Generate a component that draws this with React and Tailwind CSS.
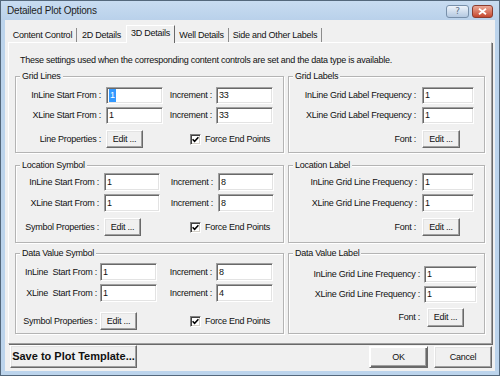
import React from 'react'

const Input = ({ className, children }) => (
  <div className={`bg-white border border-t-[#a0a0a0] border-l-[#a0a0a0] border-b-white border-r-white shadow-[inset_1px_1px_0_#696969,inset_-1px_-1px_0_#e3e3e3] pl-[2px] flex items-center ${className}`}>
    {children}
  </div>
)

const Btn = ({ className, children }) => (
  <div className={`flex items-center justify-center whitespace-nowrap bg-[#f0f0f0] border border-t-white border-l-white border-b-[#696969] border-r-[#696969] shadow-[inset_-1px_-1px_0_#a0a0a0,inset_1px_1px_0_#e3e3e3] ${className}`}>
    {children}
  </div>
)

const Check = () => (
  <div className="w-[11px] h-[11px] bg-white border border-t-[#808080] border-l-[#808080] border-b-white border-r-white shadow-[inset_1px_1px_0_#404040,inset_-1px_-1px_0_#d4d0c8] flex items-center justify-center">
    <svg width="7" height="7" viewBox="0 0 7 7">
      <path d="M0.6 3.2 L2.6 5.3 L6.4 1.2" stroke="#000" strokeWidth="1.5" fill="none" />
    </svg>
  </div>
)

const Group = ({ title, className, children }) => (
  <div className={`border border-[#b4b4b4] shadow-[inset_1px_1px_0_#fff,1px_1px_0_#fff] ${className}`}>
    <div className="-mt-[7px] ml-[4px] px-[2px] w-fit bg-[#f0f0f0] leading-[13px]">{title}</div>
    {children}
  </div>
)

const Force = ({ className }) => (
  <div className={`flex items-center ${className}`}>
    <Check />
    <span className="ml-[4px]">Force End Points</span>
  </div>
)

export default function App() {
  return (
    <div className="w-[500px] h-[376px] flex flex-col border border-[#54687c] bg-[#bcd4ec] font-['Liberation_Sans',sans-serif] text-[9px] tracking-[-0.25px] leading-[13px] text-[#111] whitespace-nowrap overflow-hidden">
      {/* title bar */}
      <div className="h-[19px] flex items-start bg-linear-to-b from-[#c8dcf1] to-[#b9d1ea]">
        <span className="ml-[6px] mt-[3px] text-[10px] tracking-[-0.2px] text-[#1e1e1e]">Detailed Plot Options</span>
        <div className="ml-auto mt-[4px] mr-[6px] flex gap-[3px]">
          <div className="w-[23px] h-[13px] rounded-[3px] border border-[#7890aa] bg-linear-to-b from-[#eef4fb] to-[#b4c9e1] flex items-center justify-center font-['DejaVu_Sans',sans-serif] text-[9px] leading-[9px] text-[#5c6f84]">?</div>
          <div className="w-[21px] h-[13px] rounded-[3px] border border-[#8b3c2f] bg-linear-to-b from-[#eaa897] to-[#c4462e] flex items-center justify-center">
            <svg width="9" height="7" viewBox="0 0 9 7">
              <path d="M1 0.8 L8 6.2 M8 0.8 L1 6.2" stroke="#fff" strokeWidth="1.8" />
            </svg>
          </div>
        </div>
      </div>

      {/* client area */}
      <div className="flex-1 mx-[4px] mb-[4px] bg-[#f0f0f0] flex flex-col">
        {/* tabs */}
        <div className="mt-[5px] ml-[4px] h-[17px] flex items-end">
          <div className="w-[68px] h-[14px] border-r border-[#8c8c8c] text-center leading-[14px]">Content Control</div>
          <div className="w-[49px] h-[14px] text-center leading-[14px]">2D Details</div>
          <div className="relative z-10 w-[49px] h-[18px] -mb-[1px] bg-[#f0f0f0] border-t border-l border-white border-r border-r-[#696969] text-center pt-[1px]">3D Details</div>
          <div className="w-[54px] h-[14px] border-r border-[#8c8c8c] text-center leading-[14px]">Well Details</div>
          <div className="w-[93px] h-[14px] border-r border-[#8c8c8c] text-center leading-[14px]">Side and Other Labels</div>
        </div>

        {/* tab panel */}
        <div className="mx-[3px] h-[302px] border border-t-white border-l-white border-b-[#a0a0a0] border-r-[#a0a0a0] shadow-[1px_1px_0_#696969]">
          <p className="mt-[11px] ml-[11px]">These settings used when the corresponding content controls are set and the data type is available.</p>

          <div className="mt-[9px] ml-[6px] flex flex-col">
            {/* row 1 */}
            <div className="flex gap-[4px]">
              <Group title="Grid Lines" className="w-[269px] h-[77px]">
                <div className="mt-[4px] flex items-center">
                  <div className="w-[85px] text-right">InLine Start From :</div>
                  <Input className="ml-[5px] w-[57px] h-[17px]"><span className="bg-[#3399ff] text-white px-[1px]">1</span></Input>
                  <div className="w-[49px] text-right">Increment :</div>
                  <Input className="ml-[4px] w-[57px] h-[17px]">33</Input>
                </div>
                <div className="mt-[3px] flex items-center">
                  <div className="w-[85px] text-right">XLine Start From :</div>
                  <Input className="ml-[5px] w-[57px] h-[17px]">1</Input>
                  <div className="w-[49px] text-right">Increment :</div>
                  <Input className="ml-[4px] w-[57px] h-[17px]">33</Input>
                </div>
                <div className="mt-[6px] flex items-center">
                  <div className="w-[85px] text-right">Line Properties :</div>
                  <Btn className="ml-[5px] w-[37px] h-[18px]">Edit ...</Btn>
                  <Force className="ml-[47px]" />
                </div>
              </Group>
              <Group title="Grid Labels" className="w-[197px] h-[77px]">
                <div className="mt-[4px] flex items-center pr-[10px]">
                  <div className="flex-1 text-right">InLine Grid Label Frequency :</div>
                  <Input className="ml-[6px] w-[52px] h-[17px]">1</Input>
                </div>
                <div className="mt-[3px] flex items-center pr-[10px]">
                  <div className="flex-1 text-right">XLine Grid Label Frequency :</div>
                  <Input className="ml-[6px] w-[52px] h-[17px]">1</Input>
                </div>
                <div className="mt-[6px] flex items-center pr-[24px]">
                  <div className="flex-1 text-right">Font :</div>
                  <Btn className="ml-[6px] w-[38px] h-[18px]">Edit ...</Btn>
                </div>
              </Group>
            </div>

            {/* row 2 */}
            <div className="mt-[12px] flex gap-[4px]">
              <Group title="Location Symbol" className="w-[269px] h-[78px]">
                <div className="mt-[1px] flex items-center">
                  <div className="w-[83px] text-right">InLine Start From :</div>
                  <Input className="ml-[5px] w-[56px] h-[18px]">1</Input>
                  <div className="w-[53px] text-right">Increment :</div>
                  <Input className="ml-[5px] w-[56px] h-[18px]">8</Input>
                </div>
                <div className="mt-[3px] flex items-center">
                  <div className="w-[83px] text-right">XLine Start From :</div>
                  <Input className="ml-[5px] w-[56px] h-[18px]">1</Input>
                  <div className="w-[53px] text-right">Increment :</div>
                  <Input className="ml-[5px] w-[56px] h-[18px]">8</Input>
                </div>
                <div className="mt-[6px] flex items-center">
                  <div className="w-[83px] text-right">Symbol Properties :</div>
                  <Btn className="ml-[5px] w-[37px] h-[18px]">Edit ...</Btn>
                  <Force className="ml-[49px]" />
                </div>
              </Group>
              <Group title="Location Label" className="w-[197px] h-[78px]">
                <div className="mt-[1px] flex items-center pr-[10px]">
                  <div className="flex-1 text-right">InLine Grid Line Frequency :</div>
                  <Input className="ml-[5px] w-[52px] h-[18px]">1</Input>
                </div>
                <div className="mt-[3px] flex items-center pr-[10px]">
                  <div className="flex-1 text-right">XLine Grid Line Frequency :</div>
                  <Input className="ml-[5px] w-[52px] h-[18px]">1</Input>
                </div>
                <div className="mt-[6px] flex items-center pr-[24px]">
                  <div className="flex-1 text-right">Font :</div>
                  <Btn className="ml-[6px] w-[38px] h-[18px]">Edit ...</Btn>
                </div>
              </Group>
            </div>

            {/* row 3 */}
            <div className="mt-[10px] flex gap-[4px]">
              <Group title="Data Value Symbol" className="w-[269px] h-[81px]">
                <div className="mt-[3px] flex items-center">
                  <div className="w-[81px] text-right whitespace-pre">InLine  Start From :</div>
                  <Input className="ml-[3px] w-[57px] h-[18px]">1</Input>
                  <div className="w-[55px] text-right">Increment :</div>
                  <Input className="ml-[4px] w-[57px] h-[18px]">8</Input>
                </div>
                <div className="mt-[3px] flex items-center">
                  <div className="w-[81px] text-right whitespace-pre">XLine  Start From :</div>
                  <Input className="ml-[3px] w-[57px] h-[18px]">1</Input>
                  <div className="w-[55px] text-right">Increment :</div>
                  <Input className="ml-[4px] w-[57px] h-[18px]">4</Input>
                </div>
                <div className="mt-[10px] flex items-center">
                  <div className="w-[81px] text-right">Symbol Properties :</div>
                  <Btn className="ml-[3px] w-[37px] h-[18px]">Edit ...</Btn>
                  <Force className="ml-[53px]" />
                </div>
              </Group>
              <Group title="Data Value Label" className="w-[197px] h-[81px]">
                <div className="mt-[6px] flex items-center pr-[7px]">
                  <div className="flex-1 text-right">InLine Grid Line Frequency :</div>
                  <Input className="ml-[4px] w-[53px] h-[17px]">1</Input>
                </div>
                <div className="mt-[3px] flex items-center pr-[7px]">
                  <div className="flex-1 text-right">XLine Grid Line Frequency :</div>
                  <Input className="ml-[4px] w-[53px] h-[17px]">1</Input>
                </div>
                <div className="mt-[5px] flex items-center pr-[20px]">
                  <div className="flex-1 text-right">Font :</div>
                  <Btn className="ml-[7px] w-[37px] h-[19px]">Edit ...</Btn>
                </div>
              </Group>
            </div>
          </div>
        </div>

        {/* bottom buttons */}
        <div className="mt-[1px] flex items-start">
          <Btn className="ml-[5px] w-[127px] h-[23px] font-bold text-[11px] tracking-normal">Save to Plot Template...</Btn>
          <Btn className="ml-auto mt-[1px] w-[59px] h-[22px] border-[#000] border-t-[#000] border-l-[#000] border-b-[#000] border-r-[#000] shadow-[inset_1px_1px_0_#fff,inset_-1px_-1px_0_#696969,inset_-2px_-2px_0_#a0a0a0]">OK</Btn>
          <Btn className="ml-[6px] mr-[3px] mt-[1px] w-[58px] h-[22px]">Cancel</Btn>
        </div>
      </div>
    </div>
  )
}
